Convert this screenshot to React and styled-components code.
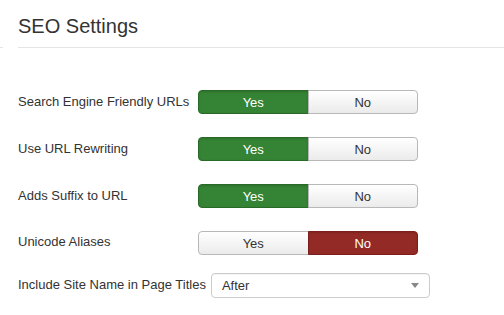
import React, { useState } from 'react'
import styled, { createGlobalStyle } from 'styled-components'

const GlobalStyle = createGlobalStyle`
  body {
    margin: 0;
    background: #fff;
    font-family: "Liberation Sans", Arial, sans-serif;
    font-size: 13px;
    color: #333;
  }
`

const Page = styled.div`
  width: 504px;
  height: 315px;
  overflow: hidden;
`

const Header = styled.div`
  display: flex;
  align-items: flex-end;
  height: 48px;
`

const Edge = styled.div`
  width: 3px;
  border-bottom: 1px solid #e5e5e5;
  margin-right: 15px;
`

const Title = styled.h2`
  flex: 1;
  margin: 0;
  padding-bottom: 9px;
  font-size: 20px;
  font-weight: normal;
  line-height: 24px;
  color: #333;
  border-bottom: 1px solid #e5e5e5;
`

const Form = styled.div`
  padding: 42px 18px 0;
  display: flex;
  flex-direction: column;
  gap: 23px;
`

const Row = styled.div`
  display: flex;
  align-items: center;
  height: 24px;
  &:last-child {
    margin-top: -5px;
  }
`

const Label = styled.label`
  min-width: 175px;
  padding-right: 5px;
  white-space: nowrap;
  line-height: 18px;
  margin-top: ${p => (p.$raise ? '-3px' : '0')};
`

const Toggle = styled.div`
  display: flex;
  width: 220px;
  height: 24px;
`

const colors = {
  yes: { bg: '#358335', border: '#286a28' },
  no: { bg: '#942a25', border: '#7a1f1b' },
}

const Option = styled.button`
  flex: 1;
  padding: 0;
  font-family: inherit;
  font-size: 13px;
  cursor: pointer;
  border: 1px solid ${p => (p.$active ? colors[p.$kind].border : '#b8b8b8')};
  color: ${p => (p.$active ? '#fff' : '#333')};
  background: ${p =>
    p.$active
      ? colors[p.$kind].bg
      : 'linear-gradient(#ffffff, #ebebeb)'};
  box-shadow: ${p => (p.$active ? 'inset 0 1px 2px rgba(0,0,0,0.15)' : 'inset 0 1px 0 rgba(255,255,255,0.3)')};
  &:first-child {
    border-radius: 4px 0 0 4px;
  }
  &:last-child {
    border-radius: 0 4px 4px 0;
    margin-left: -1px;
  }
`

const SelectBox = styled.div`
  box-sizing: border-box;
  width: 219px;
  height: 25px;
  display: flex;
  align-items: center;
  justify-content: space-between;
  padding: 0 10px 0 10px;
  border: 1px solid #cccccc;
  border-radius: 4px;
  background: #fff;
  box-shadow: inset 0 1px 1px rgba(0, 0, 0, 0.05);
`

const Caret = styled.span`
  width: 0;
  height: 0;
  border-left: 4px solid transparent;
  border-right: 4px solid transparent;
  border-top: 5px solid #888;
`

function YesNo({ initial }) {
  const [value, setValue] = useState(initial)
  return (
    <Toggle>
      <Option $kind="yes" $active={value === 'yes'} onClick={() => setValue('yes')}>Yes</Option>
      <Option $kind="no" $active={value === 'no'} onClick={() => setValue('no')}>No</Option>
    </Toggle>
  )
}

const settings = [
  { label: 'Search Engine Friendly URLs', value: 'yes' },
  { label: 'Use URL Rewriting', value: 'yes' },
  { label: 'Adds Suffix to URL', value: 'yes' },
  { label: 'Unicode Aliases', value: 'no' },
]

export default function App() {
  return (
    <Page>
      <GlobalStyle />
      <Header>
        <Edge />
        <Title>SEO Settings</Title>
      </Header>
      <Form>
        {settings.map(s => (
          <Row key={s.label}>
            <Label $raise={s.value === 'no'}>{s.label}</Label>
            <YesNo initial={s.value} />
          </Row>
        ))}
        <Row>
          <Label>Include Site Name in Page Titles</Label>
          <SelectBox>
            <span>After</span>
            <Caret />
          </SelectBox>
        </Row>
      </Form>
    </Page>
  )
}
